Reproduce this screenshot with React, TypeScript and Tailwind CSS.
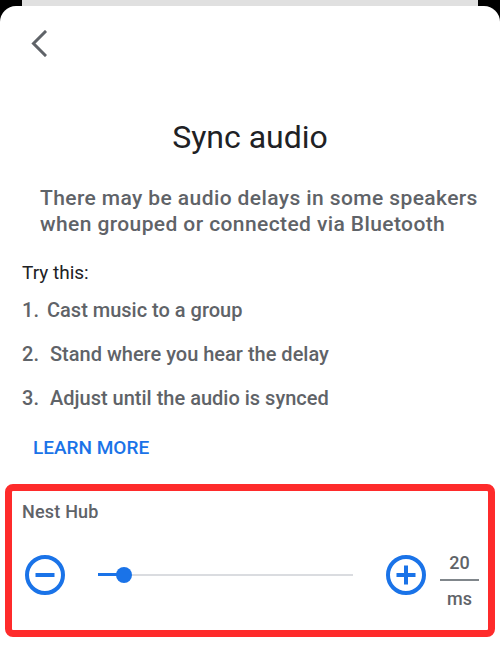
import React from 'react';

const STEPS = [
  { text: 'Cast music to a group', indent: 'w-[25px]' },
  { text: 'Stand where you hear the delay', indent: 'w-[28px]' },
  { text: 'Adjust until the audio is synced', indent: 'w-[28px]' },
];

export default function App() {
  return (
    <div className="w-[500px] h-[645px] overflow-hidden bg-black font-['Roboto','Liberation_Sans',sans-serif]">
      {/* sheet behind */}
      <div className="h-[6px] mx-[22px] bg-[#e0e0e0]" />

      <div className="h-[639px] bg-white rounded-t-[16px] flex flex-col">
        {/* back */}
        <div className="pl-[30px] pt-[24px]">
          <svg width="17" height="27" viewBox="0 0 17 27" fill="none">
            <path d="M15 2L3.5 13.5L15 25" stroke="#5f6368" strokeWidth="3" strokeLinecap="square" />
          </svg>
        </div>

        <h1 className="mt-[62px] text-center text-[32px] leading-[36px] text-[#202124]">Sync audio</h1>

        <p className="mt-[30px] pl-[40px] text-left text-[21px] leading-[26px] tracking-[0.4px] font-medium text-[#5f6368]">
          There may be audio delays in some speakers
          <br />
          when grouped or connected via Bluetooth
        </p>

        <div className="px-[22px]">
          <p className="mt-[24px] text-[19px] leading-[24px] text-[#202124]">Try this:</p>
          <ol className="mt-[13px] flex flex-col gap-[20px]">
            {STEPS.map((s, i) => (
              <li key={s.text} className="flex text-[20px] leading-[24px] font-medium text-[#5f6368]">
                <span className={`${s.indent} shrink-0`}>{i + 1}.</span>
                <span>{s.text}</span>
              </li>
            ))}
          </ol>
          <button className="mt-[26px] ml-[11px] text-[19px] leading-[24px] font-medium text-[#1a73e8]">LEARN MORE</button>
        </div>

        {/* highlighted device row */}
        <div className="mt-[23px] mx-[5px] border-[7px] border-[#fe2b2b] rounded-[8px] pt-[9px] pb-[20px]">
          <p className="pl-[10px] text-[18px] leading-[24px] tracking-[0.2px] font-medium text-[#5f6368]">Nest Hub</p>
          <div className="mt-[15px] flex items-center pl-[13px]">
            <svg width="40" height="40" viewBox="0 0 40 40" fill="none" className="shrink-0">
              <circle cx="20" cy="20" r="18" stroke="#1a73e8" strokeWidth="4" />
              <path d="M10.5 20H29.5" stroke="#1a73e8" strokeWidth="4" />
            </svg>

            <div className="ml-[33px] w-[255px] h-[16px] relative flex items-center">
              <div className="h-[2px] w-full bg-[#dadce0]" />
              <div className="absolute left-0 h-[3px] w-[26px] bg-[#1a73e8]" />
              <div className="absolute left-[18px] w-[16px] h-[16px] rounded-full bg-[#1a73e8]" />
            </div>

            <svg width="40" height="40" viewBox="0 0 40 40" fill="none" className="shrink-0 ml-[33px]">
              <circle cx="20" cy="20" r="18" stroke="#1a73e8" strokeWidth="4" />
              <path d="M10.5 20H29.5M20 10.5V29.5" stroke="#1a73e8" strokeWidth="4" />
            </svg>

            <div className="ml-[14px] mt-[13px] w-[39px] flex flex-col items-center text-[18px] leading-[22px] text-[#5f6368]">
              <span className="font-medium">20</span>
              <div className="mt-[5px] mb-[7px] h-[2px] w-full bg-[#80868b]" />
              <span className="font-medium">ms</span>
            </div>
          </div>
        </div>
      </div>
    </div>
  );
}
